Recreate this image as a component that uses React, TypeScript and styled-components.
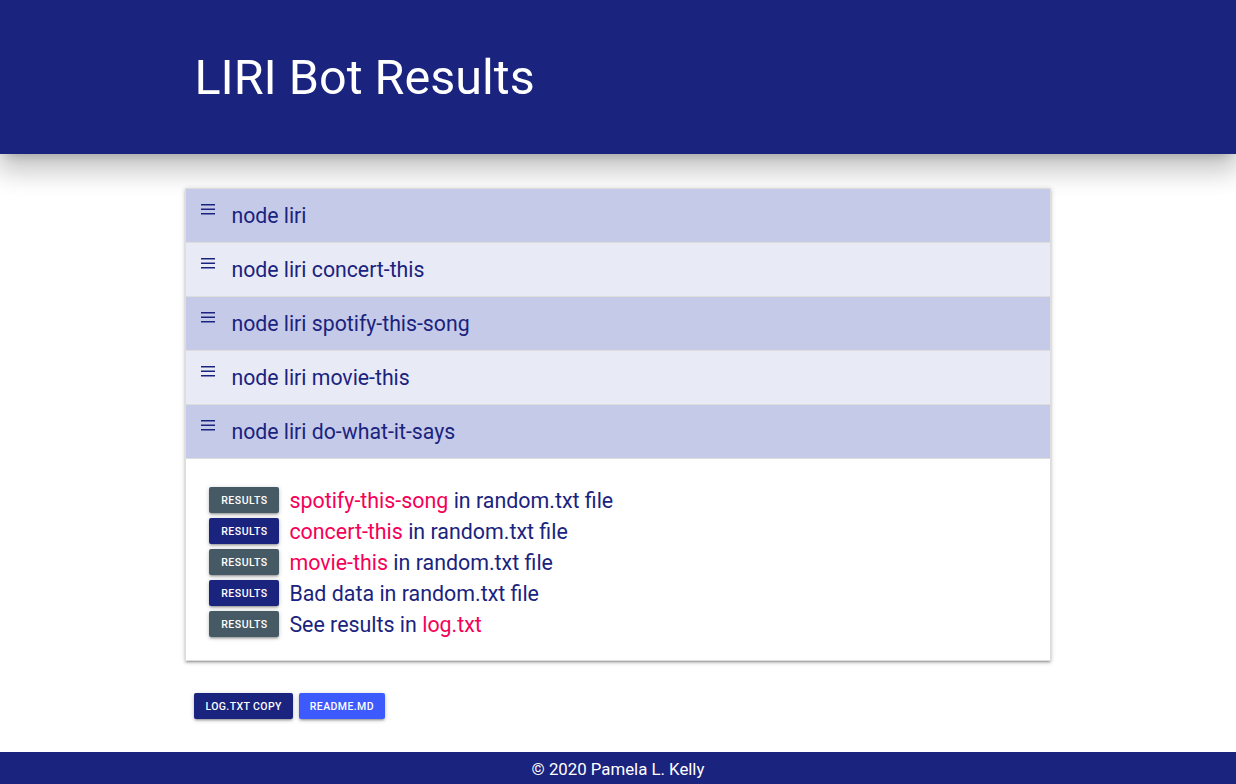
import React from "react";
import styled, { createGlobalStyle } from "styled-components";

const Global = createGlobalStyle`
  html, body { margin: 0; padding: 0; background: #ffffff; }
  body { font-family: Roboto, "Liberation Sans", sans-serif; }
  * { box-sizing: border-box; }
`;

const Page = styled.div`
  min-height: 784px;
  display: flex;
  flex-direction: column;
`;

const Header = styled.header`
  height: 154px;
  background: #1a237e;
  box-shadow: 0 16px 24px 2px rgba(0,0,0,0.14), 0 6px 30px 5px rgba(0,0,0,0.12), 0 8px 10px -7px rgba(0,0,0,0.2);
  display: flex;
  align-items: center;
`;

const Container = styled.div`
  width: 70%;
  margin: 0 auto;
`;

const Title = styled.h1`
  margin: 0 0 0 9px;
  padding-top: 2px;
  color: #ffffff;
  font-weight: 400;
  font-size: 48.5px;
  line-height: 1;
`;

const Main = styled.main`
  flex: 1;
  padding-top: 34px;
`;

const Collapsible = styled.ul`
  list-style: none;
  margin: 0;
  padding: 0;
  border: 1px solid #ddd;
  box-shadow: 0 2px 2px 0 rgba(0,0,0,0.14), 0 3px 1px -2px rgba(0,0,0,0.12), 0 1px 5px 0 rgba(0,0,0,0.2);
`;

const ItemHeader = styled.div<{ $light?: boolean }>`
  height: 54px;
  display: flex;
  align-items: center;
  padding: 0 15px;
  background: ${(p) => (p.$light ? "#e8eaf6" : "#c5cae9")};
  border-bottom: 1px solid #ddd;
  color: #1a237e;
  font-size: 21.25px;
`;

const MenuIcon = styled.svg`
  width: 14px;
  height: 11px;
  align-self: flex-start;
  margin-top: 15px;
  margin-right: 16px;
  flex-shrink: 0;
`;

const Body = styled.div`
  background: #ffffff;
  padding: 28px 23px 23px;
  display: flex;
  flex-direction: column;
  gap: 5px;
`;

const ResultRow = styled.div`
  display: flex;
  align-items: center;
  gap: 10px;
  height: 26px;
  font-size: 21.4px;
  color: #1a237e;
  white-space: nowrap;
`;

const SmallBtn = styled.button<{ $dark?: boolean }>`
  width: 70px;
  height: 26px;
  border: none;
  border-radius: 2px;
  background: ${(p) => (p.$dark ? "#1a237e" : "#455a64")};
  color: #ffffff;
  font-family: Roboto, "Liberation Sans", sans-serif;
  font-size: 10.5px;
  font-weight: 500;
  letter-spacing: 0.5px;
  text-transform: uppercase;
  padding: 0;
  box-shadow: 0 2px 2px 0 rgba(0,0,0,0.14), 0 3px 1px -2px rgba(0,0,0,0.12), 0 1px 5px 0 rgba(0,0,0,0.2);
  flex-shrink: 0;
`;

const Pink = styled.span`
  color: #f50057;
`;

const BtnBar = styled.div`
  display: flex;
  gap: 6px;
  margin: 32px 0 33px 9px;
`;

const Btn = styled.button<{ $accent?: boolean }>`
  height: 26px;
  padding: 0 11px;
  border: none;
  border-radius: 2px;
  background: ${(p) => (p.$accent ? "#3d5afe" : "#1a237e")};
  color: #ffffff;
  font-family: Roboto, "Liberation Sans", sans-serif;
  font-size: 10.5px;
  font-weight: 500;
  letter-spacing: 0.4px;
  text-transform: uppercase;
  box-shadow: 0 2px 2px 0 rgba(0,0,0,0.14), 0 3px 1px -2px rgba(0,0,0,0.12), 0 1px 5px 0 rgba(0,0,0,0.2);
`;

const Footer = styled.footer`
  background: #1a237e;
  color: #ffffff;
  height: 32px;
  display: flex;
  align-items: center;
  justify-content: center;
  font-size: 16.8px;
  padding-top: 2px;
`;

const Menu = () => (
  <MenuIcon viewBox="0 0 14 11">
    <rect x="0" y="0" width="14" height="1.5" fill="#1a237e" />
    <rect x="0" y="4.5" width="14" height="1.5" fill="#1a237e" />
    <rect x="0" y="9" width="14" height="1.5" fill="#1a237e" />
  </MenuIcon>
);

const commands = [
  "node liri",
  "node liri concert-this",
  "node liri spotify-this-song",
  "node liri movie-this",
  "node liri do-what-it-says",
];

export default function App() {
  return (
    <Page>
      <Global />
      <Header>
        <Container>
          <Title>LIRI Bot Results</Title>
        </Container>
      </Header>
      <Main>
        <Container>
          <Collapsible>
            {commands.map((c, i) => (
              <li key={c}>
                <ItemHeader $light={i % 2 === 1}>
                  <Menu />
                  <span>{c}</span>
                </ItemHeader>
              </li>
            ))}
            <li>
              <Body>
                <ResultRow>
                  <SmallBtn>Results</SmallBtn>
                  <span><Pink>spotify-this-song</Pink> in random.txt file</span>
                </ResultRow>
                <ResultRow>
                  <SmallBtn $dark>Results</SmallBtn>
                  <span><Pink>concert-this</Pink> in random.txt file</span>
                </ResultRow>
                <ResultRow>
                  <SmallBtn>Results</SmallBtn>
                  <span><Pink>movie-this</Pink> in random.txt file</span>
                </ResultRow>
                <ResultRow>
                  <SmallBtn $dark>Results</SmallBtn>
                  <span>Bad data in random.txt file</span>
                </ResultRow>
                <ResultRow>
                  <SmallBtn>Results</SmallBtn>
                  <span>See results in <Pink>log.txt</Pink></span>
                </ResultRow>
              </Body>
            </li>
          </Collapsible>
          <BtnBar>
            <Btn>log.txt copy</Btn>
            <Btn $accent>readme.md</Btn>
          </BtnBar>
        </Container>
      </Main>
      <Footer>© 2020 Pamela L. Kelly</Footer>
    </Page>
  );
}
